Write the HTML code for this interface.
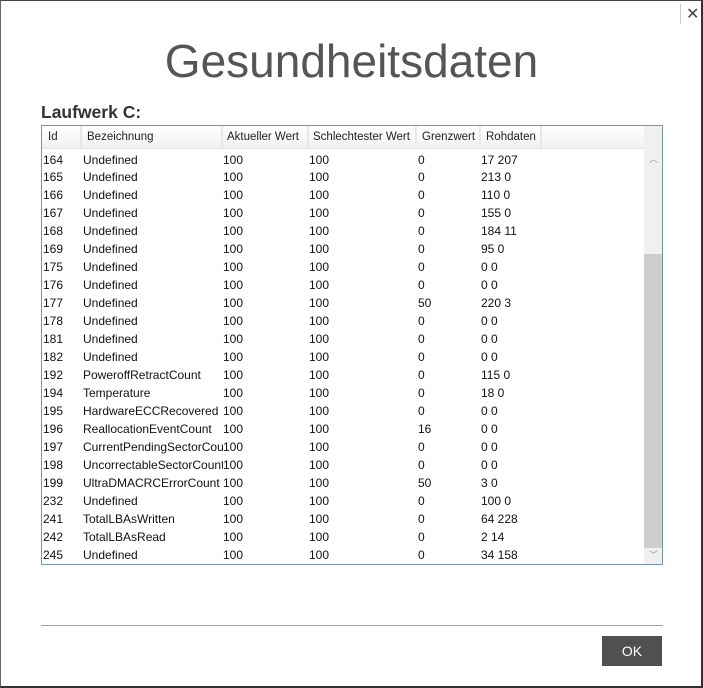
<!DOCTYPE html>
<html><head><meta charset="utf-8"><style>
*{margin:0;padding:0;box-sizing:border-box}
body{width:703px;height:688px;background:#fff;font-family:"Liberation Sans",sans-serif;position:relative;overflow:hidden;color:#111}
.win{position:absolute;left:0;top:0;width:703px;height:688px;border-right:2px solid #333;border-bottom:2px solid #333;border-top:1px solid #444;border-left:1px solid #666}
.x{position:absolute;left:686px;top:4px;font-size:16px;color:#444}
.xsep{position:absolute;left:680px;top:4px;width:1px;height:20px;background:#ccc}
h1{position:absolute;left:0;width:703px;top:34px;text-align:center;font-weight:normal;font-size:46px;color:#555}
h2{position:absolute;left:41px;top:102px;font-size:17.5px;font-weight:bold;color:#333}
.tbl{position:absolute;left:41px;top:125px;width:622px;height:440px;border:1px solid #7a93b3;overflow:hidden}
.hdr{position:absolute;left:0;top:0;width:602px;height:23px;background:linear-gradient(#fff,#f1f1f1);border-bottom:1px solid #e5e5e5;font-size:11.5px;color:#222}
.hdr span{position:absolute;top:5px;white-space:nowrap}
.hs{position:absolute;top:0;width:2px;height:23px;background:#e8e8e8}
.row{position:absolute;left:0;height:18px;font-size:12px;width:600px}
.row span{position:absolute;top:2px;white-space:nowrap;overflow:hidden}
.sb{position:absolute;left:602px;top:0;width:18px;height:438px;background:#f0f0f0}
.th{position:absolute;left:602px;top:128px;width:18px;height:294px;background:#cdcdcd}
.arr{position:absolute;left:607px;font-size:9px;color:#999}
.line{position:absolute;left:41px;top:625px;width:622px;height:1px;background:#a0a0a0}
.ok{position:absolute;left:602px;top:636px;width:60px;height:30px;background:#505050;color:#fff;font-size:14px;text-align:center;line-height:30px}
</style></head><body>
<div class="win"></div>
<div class="xsep"></div><div class="x">✕</div>
<h1>Gesundheitsdaten</h1>
<h2>Laufwerk C:</h2>
<div class="tbl">
<div class="hdr">
<span style="left:6px">Id</span><div class="hs" style="left:38px"></div>
<span style="left:45px">Bezeichnung</span><div class="hs" style="left:179px"></div>
<span style="left:185px">Aktueller Wert</span><div class="hs" style="left:265px"></div>
<span style="left:271px">Schlechtester Wert</span><div class="hs" style="left:373px"></div>
<span style="left:380px">Grenzwert</span><div class="hs" style="left:437px"></div>
<span style="left:444px">Rohdaten</span><div class="hs" style="left:498px"></div>
</div>
<div id="rows"></div>
<div class="sb"></div><div class="th"></div>
<div class="arr" style="top:26px">︿</div><div class="arr" style="top:422px">﹀</div>
</div>
<div class="line"></div>
<div class="ok">OK</div>
<script>
var d=[["164","Undefined","0","17 207"],["165","Undefined","0","213 0"],["166","Undefined","0","110 0"],["167","Undefined","0","155 0"],["168","Undefined","0","184 11"],["169","Undefined","0","95 0"],["175","Undefined","0","0 0"],["176","Undefined","0","0 0"],["177","Undefined","50","220 3"],["178","Undefined","0","0 0"],["181","Undefined","0","0 0"],["182","Undefined","0","0 0"],["192","PoweroffRetractCount","0","115 0"],["194","Temperature","0","18 0"],["195","HardwareECCRecovered","0","0 0"],["196","ReallocationEventCount","16","0 0"],["197","CurrentPendingSectorCount","0","0 0"],["198","UncorrectableSectorCount","0","0 0"],["199","UltraDMACRCErrorCount","50","3 0"],["232","Undefined","0","100 0"],["241","TotalLBAsWritten","0","64 228"],["242","TotalLBAsRead","0","2 14"],["245","Undefined","0","34 158"]];
var h="";d.forEach(function(r,i){h+='<div class="row" style="top:'+(24.5+i*17.96)+'px"><span style="left:1px">'+r[0]+'</span><span style="left:41px;width:140px">'+r[1]+'</span><span style="left:181px">100</span><span style="left:267px">100</span><span style="left:376px">'+r[2]+'</span><span style="left:439px">'+r[3]+'</span></div>'});
document.getElementById("rows").innerHTML=h;
</script>
</body></html>
